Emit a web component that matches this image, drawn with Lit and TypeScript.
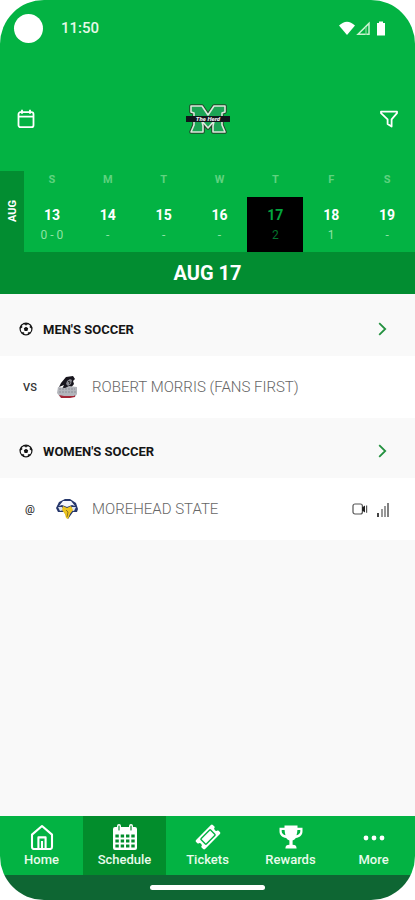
import { LitElement, html, css, svg } from "lit";
import { customElement, state } from "lit/decorators.js";
import { classMap } from "lit/directives/class-map.js";

const week = [
  { name: "S", date: 13, events: "0 - 0" },
  { name: "M", date: 14, events: "-" },
  { name: "T", date: 15, events: "-" },
  { name: "W", date: 16, events: "-" },
  { name: "T", date: 17, events: "2" },
  { name: "F", date: 18, events: "1" },
  { name: "S", date: 19, events: "-" },
];

const calendarIcon = html`<svg width="18" height="20" viewBox="0 0 18 20" fill="none" stroke="#fff" stroke-width="1.8" stroke-linejoin="round">
  <rect x="1.5" y="3.2" width="15" height="15" rx="2" /><path d="M1.500 7.600h15M5 .8v4M13 .8v4" />
</svg>`;

const filterIcon = html`<svg width="18" height="18" viewBox="0 0 18 18" fill="none" stroke="#fff" stroke-width="1.8" stroke-linejoin="round">
  <path d="M1 1.6h16v1.6l-5.4 6.200v7.200l-4-2.600V9.400L1 3.200z" />
</svg>`;

const teamLogo = html`<svg width="46" height="32" viewBox="0 0 46 32" role="img" aria-label="Marshall">
  <g stroke-linejoin="round">
    <path d="M6 3h11l6 9 6-9h11v6l-3 1v12l3 7H28v-6l1-5-6 7-6-7 1 5v6H6l3-7V10L6 9z" fill="#1ca455" stroke="#24452b" stroke-width="3.600" />
    <path d="M6 3h11l6 9 6-9h11v6l-3 1v12l3 7H28v-6l1-5-6 7-6-7 1 5v6H6l3-7V10L6 9z" fill="#1ca455" stroke="#dce8dc" stroke-width="1.600" />
  </g>
  <path d="M1 13h44v6H1z" fill="#10151a" />
  <text x="23" y="18.400" text-anchor="middle" font-family="Roboto, sans-serif" font-size="6" font-style="italic" font-weight="900" fill="#f3eef5">The Herd</text>
</svg>`;

const ballIcon = html`<svg width="14" height="14" viewBox="0 0 14 14">
  <circle cx="7" cy="7" r="5.900" fill="#fff" stroke="#161616" stroke-width="1.200" />
  <path d="M7 4.700l2.200 1.600-.8 2.600H5.600l-.8-2.600z" fill="#161616" />
  <path d="M4.800 1.600h4.400L7 3.200zM.9 6.200l1.500-3.500.7 2.700zM13.100 6.200l-1.500-3.500-.7 2.700zM2.300 10.600l2.400-.2.4 2.400zM11.700 10.600l-2.400-.2-.4 2.400z" fill="#161616" stroke="#161616" stroke-width=".6" />
</svg>`;

const chevronIcon = html`<svg width="9" height="14" viewBox="0 0 9 14" fill="none" stroke="#23913f" stroke-width="1.800">
  <path d="M1.200 1.200L7.200 7l-6 5.800" />
</svg>`;

const colonialLogo = html`<svg width="22" height="24" viewBox="0 0 22 24">
  <path d="M5 8L10 2l7-1 2 3-2 2 1 3-4 5H6l2-4-5 2z" fill="#17151d" />
  <path d="M11 6l3-2 2 1-1 4-3 2-2-2z" fill="#898991" />
  <path d="M12 6.500l2 .4-.5 2" stroke="#222" fill="none" />
  <path d="M2 12l7 1 4-2 8 1v7l-2 3H4l-3-4z" fill="#b3b5bb" />
  <path d="M3 14h16M3 17h17" stroke="#8d8f98" stroke-dasharray="2 1" />
  <path d="M3 20l5 1h10l1-1v2l-5 1H5z" fill="#a32636" />
</svg>`;

const eagleLogo = html`<svg width="24" height="22" viewBox="0 0 24 22">
  <path d="M1 10L4 4l6-3h5l6 4 2 6-1 3h-4l-5 7-4-7H3z" fill="#26376b" />
  <path d="M4 8l4-5h8l4 5-3-1-5 2-5-2z" fill="#f5f7fc" />
  <path d="M3 9h4l2 3-4 1zM21 9h-4l-2 3 4 1z" fill="#dce3f0" />
  <path d="M8 8l4 2 4-2 2 4-3 4-2 5-2-1-1-4-3-4z" fill="#edc51f" />
  <path d="M11 12l2 2-1 5" fill="none" stroke="#8d7420" />
</svg>`;

const videoIcon = html`<svg width="16" height="12" viewBox="0 0 16 12">
  <rect x="1" y="1" width="9.400" height="10" rx="2" fill="none" stroke="#555" stroke-width="1.200" />
  <path d="M10 4.400l3-2v7.200l-3-2z" fill="#222" /><path d="M14.600 2.400v7.400" stroke="#555" stroke-width="1.200" />
</svg>`;

const statsIcon = html`<svg width="14" height="15" viewBox="0 0 14 15">
  <path d="M1 11h2v4H1z" fill="#444" /><path d="M5 7h2v8H5zM8 4h2v11H8z" fill="#999" /><path d="M11 1h2v14h-2z" fill="#808080" />
</svg>`;

const tabs = [
  {
    label: "Home",
    icon: svg`<g fill="none" stroke="#fff" stroke-width="2.100" stroke-linejoin="round"><path d="M3 10.600L13 2l10 8.600V23a2 2 0 0 1-2 2H5a2 2 0 0 1-2-2z"/><path d="M9.400 25V13.400h7.200V25M13 17v8"/></g>`,
  },
  {
    label: "Schedule",
    icon: svg`<path fill="#fff" fill-rule="evenodd" d="M3 3h2V2a2 2 0 0 1 4 0v1h8V2a2 2 0 0 1 4 0v1h2a2 2 0 0 1 2 2v19a2 2 0 0 1-2 2H3a2 2 0 0 1-2-2V5a2 2 0 0 1 2-2z
      M3.400 10.400h3.400v3.200H3.400zM8.700 10.400h3.400v3.200H8.700zM14 10.400h3.400v3.200H14zM19.300 10.400h3.400v3.200h-3.400z
      M3.400 15.400h3.400v3.200H3.400zM8.700 15.400h3.400v3.200H8.700zM14 15.400h3.400v3.200H14zM19.300 15.400h3.400v3.200h-3.400z
      M3.400 20.400h3.400v3.200H3.400zM8.700 20.400h3.400v3.200H8.700zM14 20.400h3.400v3.200H14zM19.300 20.400h3.400v3.200h-3.400z"/>
      <path d="M7 2v4M19 2v4" stroke="#078b30" stroke-width="1.200" stroke-linecap="round"/>`,
  },
  {
    label: "Tickets",
    icon: svg`<g transform="rotate(-45 13 13)"><path fill="#fff" d="M2.500 6.600h21a1.400 1.400 0 0 1 1.400 1.400v2.800a2.200 2.200 0 0 0 0 4.400V18a1.400 1.400 0 0 1-1.400 1.400h-21A1.400 1.400 0 0 1 1.100 18v-2.800a2.200 2.200 0 0 0 0-4.400V8a1.400 1.400 0 0 1 1.400-1.400z"/><rect x="6.200" y="9.200" width="13.600" height="7.600" rx="1" fill="none" stroke="#03b343" stroke-width="1.400"/></g>`,
  },
  {
    label: "Rewards",
    icon: svg`<path fill="#fff" d="M6.500 1.600h13v2.200h5v3.400c0 4-3 6.300-6.600 6.800a6 6 0 0 1-3.300 2.600v4.200c2.600 0 4 1 4 3.600H7.400c0-2.600 1.400-3.600 4-3.600v-4.200A6 6 0 0 1 8.100 14C4.500 13.500 1.500 11.200 1.500 7.200V3.800h5z"/><path fill="#03b343" d="M3.700 6h2.900c.1 2 .4 3.700.9 5.300C5.200 10.700 3.700 9.300 3.700 7.200zM22.300 6h-2.900c-.1 2-.4 3.700-.9 5.300 2.300-.6 3.800-2 3.800-4.100z"/>`,
  },
  {
    label: "More",
    icon: svg`<g fill="#fff"><circle cx="5" cy="14" r="2.400"/><circle cx="13" cy="14" r="2.400"/><circle cx="21" cy="14" r="2.400"/></g>`,
  },
];

@customElement("app-root")
export class AppRoot extends LitElement {
  @state() private selected = 17;

  static styles = css`
    :host {
      display: block;
      background: #fff;
      font-family: Roboto, "Liberation Sans", sans-serif;
      color: #151515;
    }
    * { box-sizing: border-box; }
    svg { display: block; flex: none; }
    button {
      font: inherit;
      color: inherit;
      background: none;
      border: 0;
      padding: 0;
      cursor: pointer;
    }
    a { color: inherit; text-decoration: none; }
    h1, h2 { margin: 0; }
    .phone {
      display: flex;
      flex-direction: column;
      min-height: 100vh;
      background: #f9f9f9;
      border-radius: 44px;
      overflow: hidden;
    }
    .top { background: #03b343; color: #fff; }
    .status {
      display: flex;
      align-items: center;
      height: 56px;
      padding: 0 28px 0 14px;
    }
    .camera {
      width: 29px;
      height: 29px;
      border-radius: 50%;
      background: #fff;
      margin-right: 18px;
    }
    .time { flex: 1; font-size: 15px; font-weight: 500; color: #e6f9e8; }
    .bar {
      display: flex;
      align-items: center;
      justify-content: space-between;
      padding: 44px 16px 33px;
    }
    .bar svg { margin: auto; }
    .tool { width: 20px; height: 38px; }
    .calendar { display: flex; height: 81px; }
    .month {
      width: 24px;
      background: #028d31;
      display: flex;
      align-items: center;
      justify-content: center;
      font-size: 11px;
      font-weight: 700;
    }
    .month span { writing-mode: vertical-rl; transform: rotate(180deg); }
    .days { flex: 1; display: grid; grid-template-columns: repeat(7, 1fr); }
    .day { display: flex; flex-direction: column; align-items: stretch; text-align: center; }
    .name {
      height: 26px;
      line-height: 18px;
      font-size: 11px;
      font-weight: 700;
      color: #5fd27f;
    }
    .cell { flex: 1; padding-top: 8px; }
    .date { display: block; font-size: 14px; line-height: 20px; font-weight: 700; }
    .events { display: block; font-size: 12px; line-height: 20px; color: #8fe3a5; }
    .chosen .cell { background: #000; }
    .chosen .date { color: #03a53e; }
    .chosen .events { color: #04742d; }
    .heading {
      background: #028d31;
      text-align: center;
      font-size: 20px;
      line-height: 42px;
      font-weight: 700;
    }
    .list { flex: 1; padding-top: 2px; }
    .sport {
      display: flex;
      align-items: center;
      height: 60px;
      padding: 6px 28px 0 19px;
      gap: 10px;
    }
    .sport h2 { flex: 1; font-size: 13px; font-weight: 700; }
    .game {
      display: flex;
      align-items: center;
      height: 62px;
      padding: 0 25px 0 14px;
      background: #fff;
    }
    .side { width: 32px; text-align: center; font-size: 11px; font-weight: 500; color: #333; }
    .crest { width: 42px; display: flex; justify-content: center; }
    .team { flex: 1; padding-left: 4px; font-size: 15px; font-weight: 300; color: #666; }
    .extras { display: flex; align-items: center; gap: 8px; }
    .tabs { display: grid; grid-template-columns: repeat(5, 1fr); background: #03b343; color: #e9fbec; }
    .tab {
      display: flex;
      flex-direction: column;
      align-items: center;
      gap: 2px;
      height: 59px;
      padding-top: 8px;
      font-size: 13px;
      line-height: 16px;
      font-weight: 500;
    }
    .current { background: #028d2c; }
    .gesture { height: 25px; background: #0e6633; display: flex; align-items: center; justify-content: center; }
    .pill { width: 115px; height: 5px; border-radius: 3px; background: #fff; }
  `;

  private sport(title: string) {
    return html`<a class="sport" href="#">${ballIcon}<h2>${title}</h2>${chevronIcon}</a>`;
  }

  render() {
    return html`<div class="phone">
      <header class="top">
        <div class="status">
          <div class="camera"></div>
          <div class="time">11:50</div>
          <svg width="48" height="15" viewBox="0 0 48 15">
            <path d="M0 4.600Q8 -3 16 4.600L8 14z" fill="#fff" />
            <path d="M19 13.300L30 2.400v10.900z" fill="none" stroke="#c9f2d0" stroke-width="1.500" />
            <path d="M27 6v8" stroke="#7fdc95" stroke-width="1.200" />
            <path d="M40 .5h4V2h2v12.500h-8V2h2z" fill="#fff" />
          </svg>
        </div>
        <div class="bar">
          <button class="tool" aria-label="Calendar">${calendarIcon}</button>
          ${teamLogo}
          <button class="tool" aria-label="Filter">${filterIcon}</button>
        </div>
        <div class="calendar">
          <div class="month"><span>AUG</span></div>
          <div class="days">
            ${week.map(
              (d) => html`<button
                class=${classMap({ day: true, chosen: d.date === this.selected })}
                @click=${() => (this.selected = d.date)}
              >
                <span class="name">${d.name}</span>
                <span class="cell"><span class="date">${d.date}</span><span class="events">${d.events}</span></span>
              </button>`
            )}
          </div>
        </div>
        <h1 class="heading">AUG ${this.selected}</h1>
      </header>
      <main class="list">
        ${this.sport("MEN'S SOCCER")}
        <div class="game">
          <span class="side">VS</span>
          <span class="crest">${colonialLogo}</span>
          <span class="team">ROBERT MORRIS (FANS FIRST)</span>
        </div>
        ${this.sport("WOMEN'S SOCCER")}
        <div class="game">
          <span class="side">@</span>
          <span class="crest">${eagleLogo}</span>
          <span class="team">MOREHEAD STATE</span>
          <span class="extras">${videoIcon}${statsIcon}</span>
        </div>
      </main>
      <nav class="tabs">
        ${tabs.map(
          (t) => html`<a href="#" class=${classMap({ tab: true, current: t.label === "Schedule" })}>
            <svg width="26" height="26" viewBox="0 0 26 26">${t.icon}</svg>${t.label}
          </a>`
        )}
      </nav>
      <div class="gesture"><div class="pill"></div></div>
    </div>`;
  }
}
